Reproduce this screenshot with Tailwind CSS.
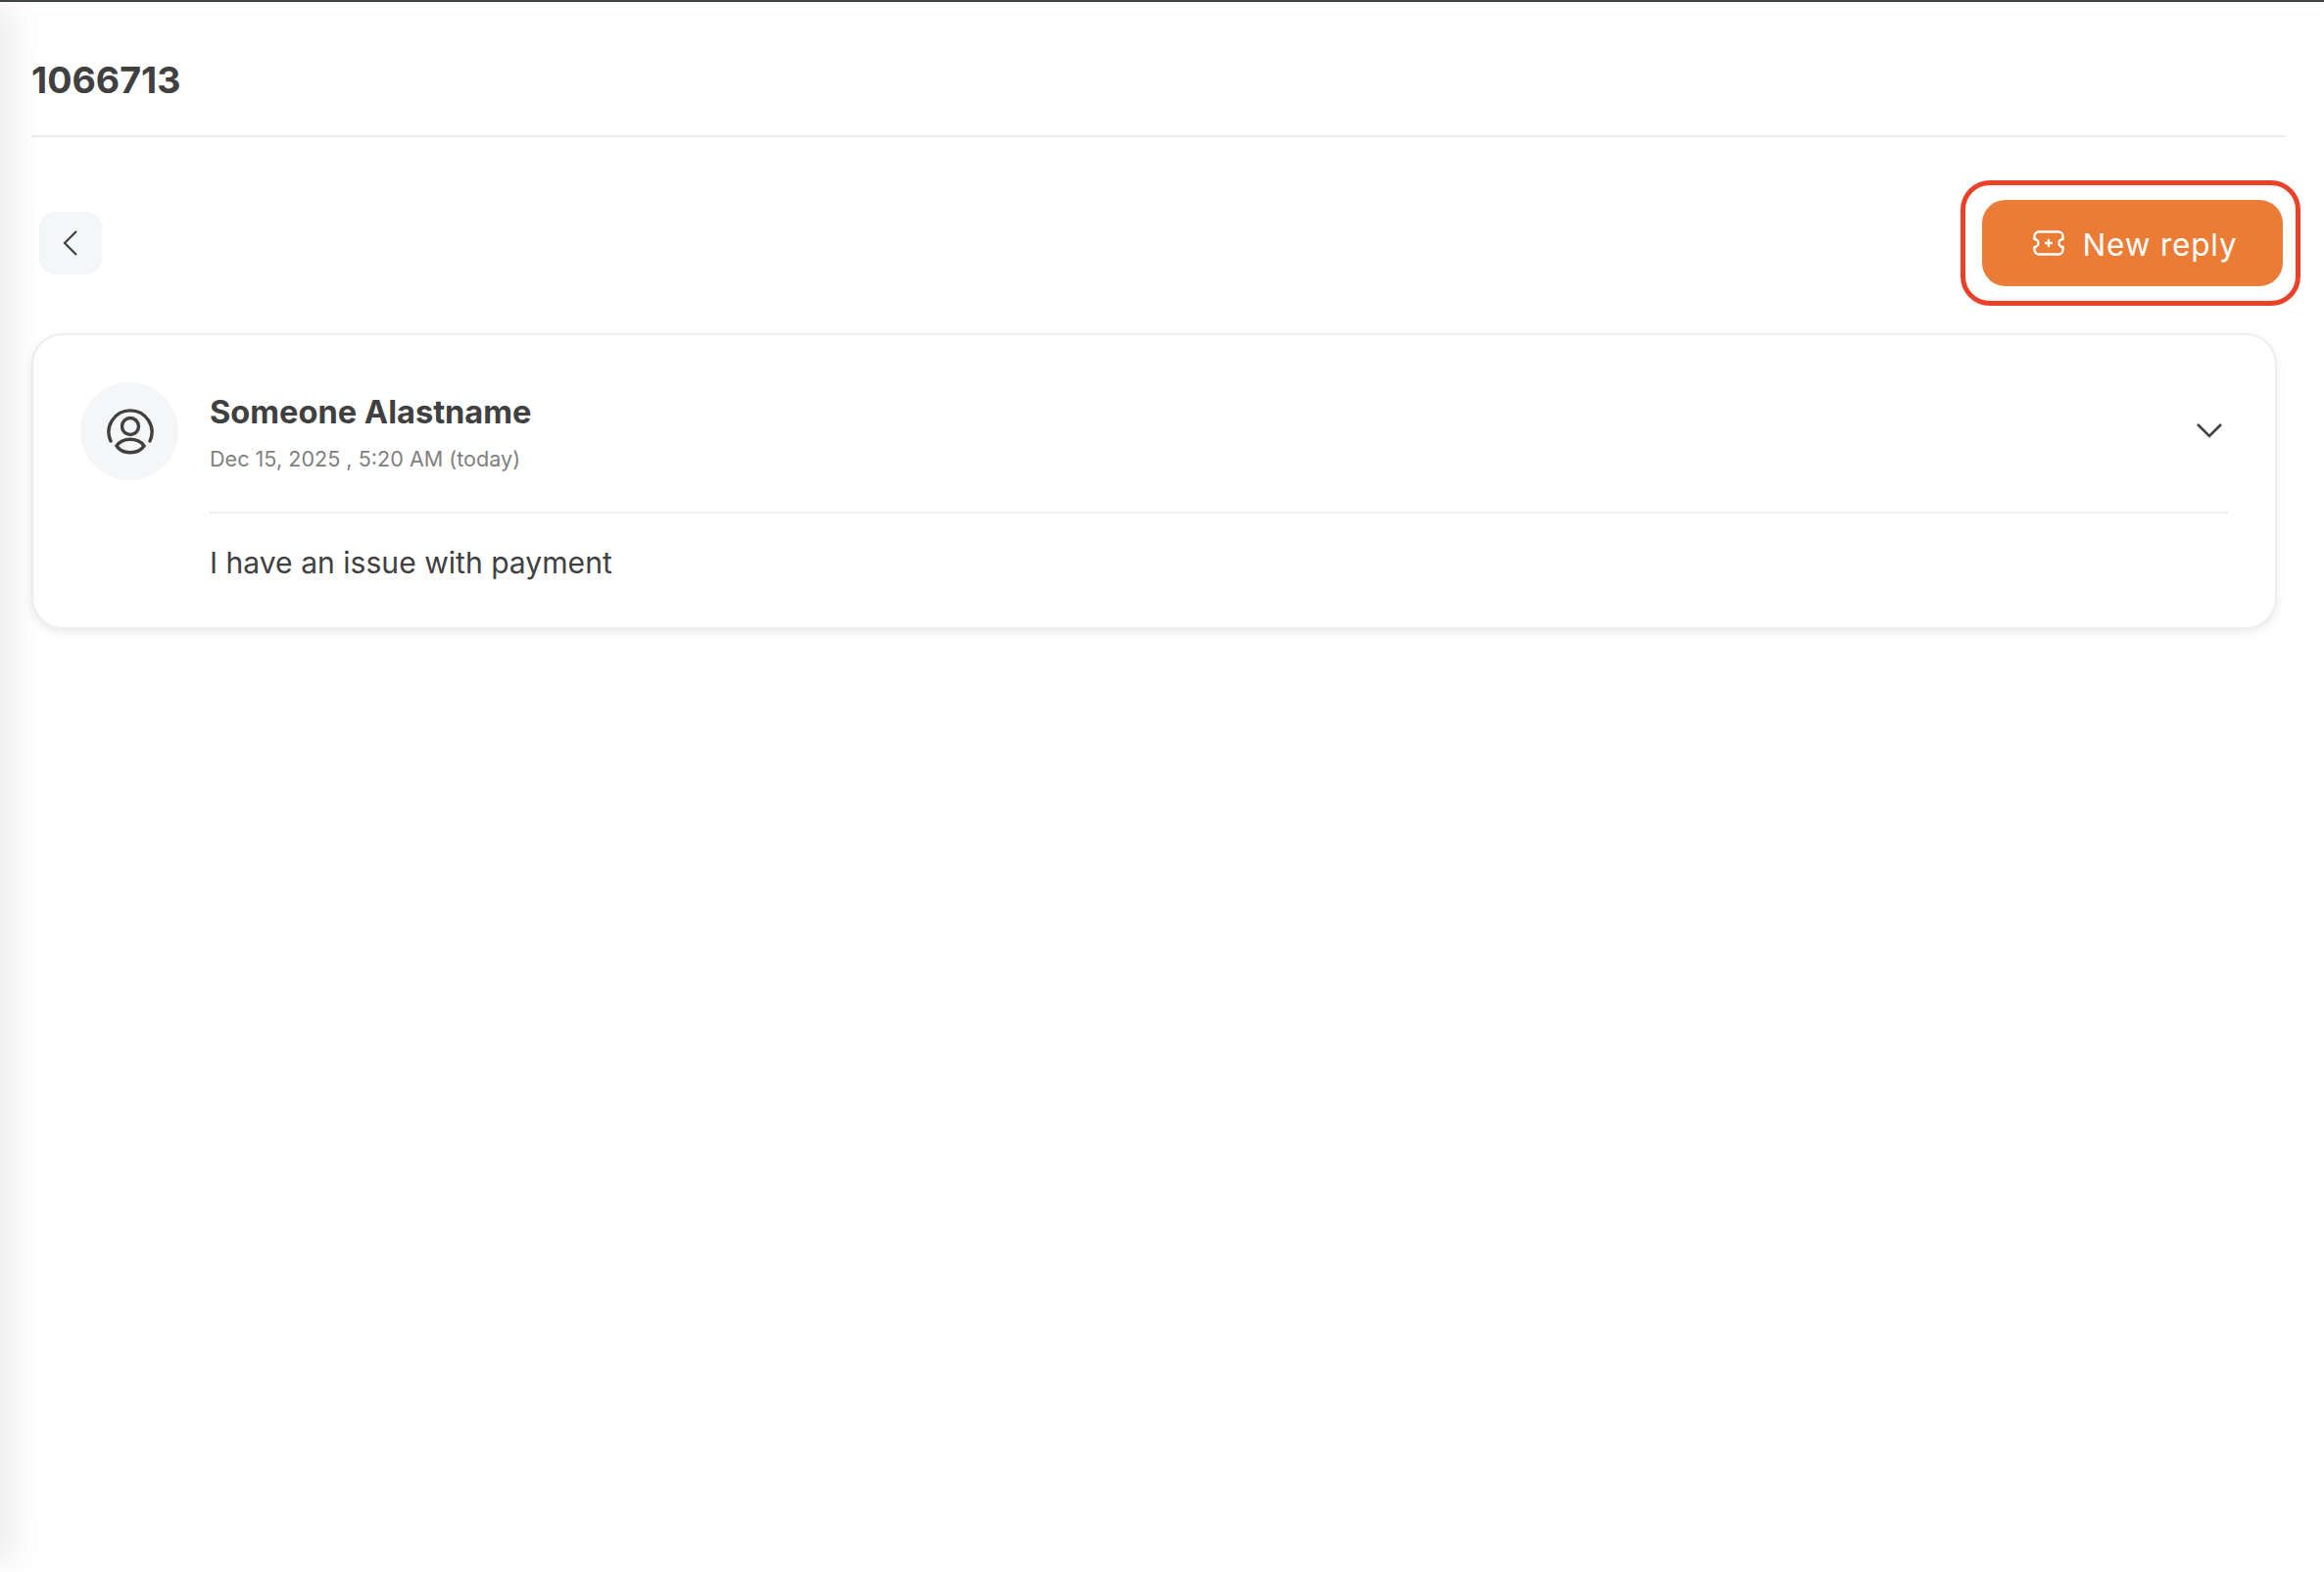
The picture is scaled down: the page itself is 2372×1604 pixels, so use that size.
<!DOCTYPE html>
<html lang="en">
<head>
  <meta charset="UTF-8">
  <title>Ticket 1066713</title>
  <script src="https://cdn.jsdelivr.net/npm/@tailwindcss/browser@4"></script>
</head>
<body class="relative bg-white w-[2372px] h-[1604px] overflow-hidden font-['Inter',sans-serif] text-[#404040]">
  <div class="h-[2px] bg-[#3f4644]"></div>

  <!-- sidebar shadow -->
  <div class="absolute left-[-40px] top-[20px] w-[40px] h-[1560px] shadow-[0_0_36px_14px_rgba(0,0,0,0.08)]"></div>

  <div class="pl-[32px] pr-[39px]">
    <div class="h-[138px] border-b-2 border-[#ededed] flex items-start">
      <h1 class="mt-[58px] text-[37.5px] leading-[44px] font-bold">1066713</h1>
    </div>

    <div class="flex justify-between items-start h-[200px] pt-[44px] pr-[1px]">
      <button class="mt-[32px] ml-[8px] w-[64px] h-[64px] rounded-[16px] bg-[#f5f6f8] flex items-center justify-center">
        <svg width="20" height="28" viewBox="0 0 20 28" fill="none" stroke="#404040" stroke-width="2.2"><path d="M16 2 L4 14 L16 26"/></svg>
      </button>
      <div class="w-[347px] h-[128px] mr-[-16px] border-[5px] border-[#ea4128] rounded-[30px] flex items-center justify-center pl-[3px]">
        <button class="w-[307px] h-[88px] rounded-[24px] bg-[#eb7c36] text-white flex items-center justify-center gap-[19px] pl-[6px] text-[31.5px] font-normal tracking-[0.8px]">
          <svg width="32" height="26" viewBox="0 0 32 26" fill="none" stroke="white" stroke-width="2.4" stroke-linejoin="round" stroke-linecap="round">
            <path d="M6 1.5 H26 A4.5 4.5 0 0 1 30.5 6 V9 A4 4 0 0 0 30.5 17 V20 A4.5 4.5 0 0 1 26 24.5 H6 A4.5 4.5 0 0 1 1.5 20 V17 A4 4 0 0 0 1.5 9 V6 A4.5 4.5 0 0 1 6 1.5 Z"/>
            <path d="M16 10 V16 M13 13 H19"/>
          </svg>
          <span class="pt-[3px]">New reply</span>
        </button>
      </div>
    </div>

    <div class="w-[2292px] h-[302px] border-2 border-[#eeeeee] rounded-[32px] bg-white shadow-[0_4px_10px_rgba(0,0,0,0.08)] flex pl-[48px] pr-[48px] pt-[48px] gap-[32px]">
      <div class="w-[100px] h-[100px] rounded-full bg-[#f5f6f8] flex items-center justify-center shrink-0">
        <svg width="50" height="52" viewBox="0 0 50 52" fill="none" stroke="#404040" stroke-width="3.4" stroke-linecap="round">
          <path d="M6 36 A22 22 0 1 1 46 36"/>
          <circle cx="26" cy="21" r="8.5"/>
          <path d="M12 41 C18 32 34 32 40 41 C34 50 18 50 12 41 Z"/>
        </svg>
      </div>
      <div class="flex-1 min-w-0">
        <div class="h-[134px] flex justify-between items-start border-b-2 border-[#eeeeee]">
          <div>
            <div class="text-[32.6px] leading-[40px] font-bold mt-[10px]">Someone Alastname</div>
            <div class="text-[21.6px] leading-[30px] text-[#808080] mt-[13px]">Dec 15, 2025 , 5:20 AM (today)</div>
          </div>
        </div>
        <p class="text-[30.1px] leading-[40px] mt-[30px]">I have an issue with payment</p>
      </div>
    </div>
  </div>

  <!-- chevron sits over the card header -->
  <svg class="absolute left-[2241px] top-[431px]" width="28" height="17" viewBox="0 0 28 17" fill="none" stroke="#404040" stroke-width="2.6"><path d="M2 2 L14 14 L26 2"/></svg>
</body>
</html>
